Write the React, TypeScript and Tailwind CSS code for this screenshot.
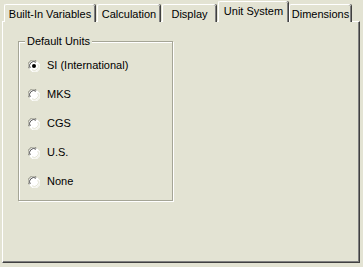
import React from "react";

const font = { fontFamily: '"Liberation Sans", Arial, sans-serif' };

function Radio({ checked }: { checked?: boolean }) {
  return (
    <svg width="12" height="12" viewBox="0 0 12 12" className="shrink-0">
      <circle cx="6" cy="6" r="5.5" fill="#ffffff" />
      <path d="M1.2 8.5 A5.2 5.2 0 0 1 8.5 1.2" stroke="#8c8c80" strokeWidth="1" fill="none" />
      <path d="M2.2 8 A4.2 4.2 0 0 1 8 2.2" stroke="#505050" strokeWidth="1" fill="none" />
      <path d="M3.5 10.8 A5.2 5.2 0 0 0 10.8 3.5" stroke="#ffffff" strokeWidth="1" fill="none" />
      <path d="M4 9.8 A4.2 4.2 0 0 0 9.8 4" stroke="#e3e3d3" strokeWidth="1" fill="none" />
      {checked && <circle cx="6" cy="6" r="2" fill="#000000" />}
    </svg>
  );
}

function Tab({ label, cls, selected }: { label: string; cls: string; selected?: boolean }) {
  if (selected) {
    return (
      <div
        className={`${cls} h-[21px] relative z-10 flex items-start justify-center pt-[3px] bg-[#e3e3d3] border-l border-t border-white shadow-[inset_-1px_0_0_#808080,1px_0_0_#404040] rounded-tl-[2px] rounded-tr-[2px]`}
      >
        <span className="text-[11px] leading-[13px] text-black whitespace-nowrap">{label}</span>
      </div>
    );
  }
  return (
    <div
      className={`${cls} h-[18px] flex items-start justify-center pt-[3px] bg-[#e3e3d3] border-l border-t border-white shadow-[inset_-1px_0_0_#808080,1px_0_0_#404040] rounded-tl-[2px] rounded-tr-[2px]`}
    >
      <span className="text-[11px] leading-[13px] text-black whitespace-nowrap">{label}</span>
    </div>
  );
}

export default function App() {
  const items = ["SI (International)", "MKS", "CGS", "U.S.", "None"];
  return (
    <div className="w-[363px] h-[267px] bg-[#e3e3d3] overflow-hidden relative" style={font}>
      <div className="flex items-end pl-[4px] pt-[1px] h-[22px] relative z-10">
        <Tab label="Built-In Variables" cls="w-[91px]" />
        <Tab label="Calculation" cls="ml-[2px] w-[63px]" />
        <Tab label="Display" cls="ml-[2px] w-[54px]" />
        <Tab label="Unit System" cls="ml-[2px] w-[70px]" selected />
        <Tab label="Dimensions" cls="ml-[1px] w-[62px]" />
      </div>
      <div className="ml-[2px] w-[358px] h-[242px] -mt-[1px] border-l border-t border-white border-r border-b border-r-[#404040] border-b-[#404040] shadow-[inset_-1px_-1px_0_#808080] pt-[19px] pl-[15px]">
        <div className="relative w-[155px] h-[160px] border border-[#a5a596] shadow-[inset_1px_1px_0_#ffffff,1px_1px_0_#ffffff]">
          <div className="absolute -top-[8px] left-[6px] px-[2px] bg-[#e3e3d3] text-[11px] leading-[14px] text-black">
            Default Units
          </div>
          <div className="flex flex-col pt-[17px] pl-[9px] gap-[16px]">
            {items.map((it, i) => (
              <div key={it} className="flex items-center gap-[7px] h-[13px]">
                <Radio checked={i === 0} />
                <span className="text-[11px] leading-[13px] text-black">{it}</span>
              </div>
            ))}
          </div>
        </div>
      </div>
    </div>
  );
}
